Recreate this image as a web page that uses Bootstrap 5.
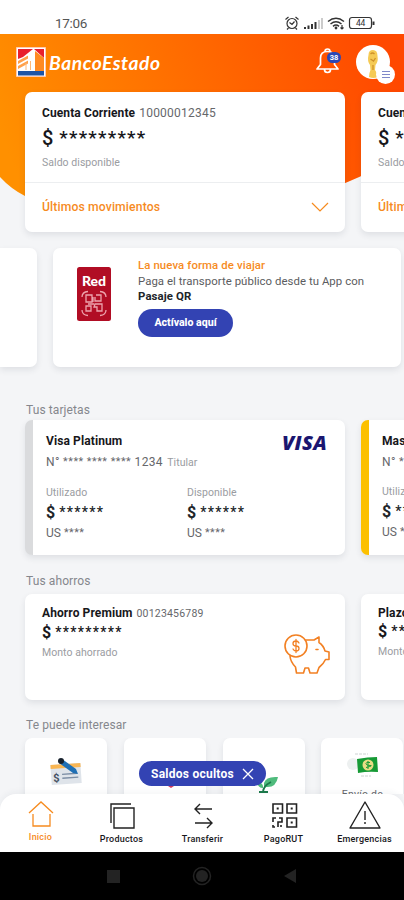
<!DOCTYPE html>
<html lang="es">
<head>
<meta charset="utf-8">
<meta name="viewport" content="width=device-width, initial-scale=1">
<title>BancoEstado</title>
<link href="https://cdn.jsdelivr.net/npm/bootstrap@5.3.0/dist/css/bootstrap.min.css" rel="stylesheet">
<style>
body{font-family:Roboto,"Liberation Sans",sans-serif;background:#f4f5f7;color:#17171b;font-size:12px;line-height:16px}
.phone{width:404px;height:900px;background:#f4f5f7}
svg{display:block;flex:none}
.statusbar{height:34px;padding:15px 28px 0 55px;color:#555;background:#fff;font-size:13.5px;letter-spacing:-.35px}
.hero{z-index:0}
.hero-shape{position:absolute;left:0;top:0;z-index:-1}
.topbar{height:58px;padding:5px 9px 0 16px}
.brand{font:italic 700 19.2px/24px Lato,sans-serif;color:#fff;letter-spacing:.55px;margin-left:3px}
.bell{margin-right:15px}
.count{position:absolute;left:12px;top:5px;width:14px;height:11px;border-radius:6px;background:#2b47b5;color:#fff;font-size:7.5px;line-height:11px;font-weight:700}
.avatar{width:39px;height:44px}
.avatar-menu{position:absolute;left:20px;top:26px}
.strip{padding-left:25px;gap:16px}
.panel{background:#fff;border-radius:7px;box-shadow:0 3px 6px rgba(40,50,70,.1);flex:none;width:320px}
.account{height:140px}
.account-top{height:91px;padding:13px 17px 0;border-bottom:1px solid #eceef0}
.account-more{height:49px;padding:0 16px 1px 17px;color:#f68b1f;font-weight:500;font-size:12.2px;letter-spacing:.12px}
.ttl{font-weight:700;letter-spacing:.1px}
.num{color:#66676b}
.acct-no{letter-spacing:.24px;margin-left:1px}
.hint{color:#9a9ca1;font-size:10.5px;letter-spacing:.05px}
.stars{display:inline-block;line-height:1}
.amt{font-weight:500;font-size:20px;line-height:26px;margin-top:4px}
.amt .stars{font-size:19px;letter-spacing:1.25px;margin-left:1px;vertical-align:1px}
.amt-sm{font-weight:700;font-size:16px;line-height:20px}
.amt-sm .stars{font-size:14px;font-weight:500;letter-spacing:1.3px;vertical-align:1px}
.promo-strip{gap:16px;margin-top:16px}
.promo{height:119px}
.promo-cut{width:37px;border-radius:0 7px 7px 0}
.promo-main{width:348px;padding:10px 20px 0 24px}
.promo-art{margin-top:9px;margin-right:27px}
.promo-copy{font-size:11.4px;line-height:15.5px;color:#5b5c60;letter-spacing:.05px}
.promo-ttl{color:#f68b1f;font-weight:500;letter-spacing:.1px}
.pill-btn{background:#3343b3;color:#fff;border-radius:14px;font-size:10.6px;line-height:28px;width:95px;height:28px;padding:0;font-weight:800;margin-top:4px;border:0}
.section-name{padding-left:26px;color:#85878d;font-size:12px;line-height:16px;letter-spacing:.1px}
.credit{height:135px;border-left:8px solid #dadbdd;padding:13px 18px 0 13px}
.credit.gold{border-color:#fcc000}
.credit-head{height:21px}
.credit-use{margin-top:14px}
.credit-use .amt-sm{margin:2px 0 2px}
.visa{font:italic 800 20px/20px "Open Sans",sans-serif;color:#1a1670;letter-spacing:.3px}
.dots{letter-spacing:.5px;font-size:10.8px;vertical-align:1px;display:inline-block;line-height:1}
.card-no{letter-spacing:.35px}
.holder{margin-left:1px}
.col-use{width:141px;flex:none}
.saving{height:106px;padding:11px 15px 0 17px}
.saving .amt-sm{margin-top:1px}
.save-no{font-size:10.5px;letter-spacing:.2px;margin-left:1px}
.tile{width:82px;height:70px}
.tiles{height:56px;gap:16.8px;overflow:hidden}
.tile-name{font-size:10.5px;letter-spacing:.2px}
.toast-pill{position:absolute;left:139px;top:761px;width:127px;height:25px;border-radius:13px;background:#3343b3;color:#fff;font-weight:700;font-size:12px;letter-spacing:.25px;padding:0 12px}
.tabs{height:58px;background:#fff;border-radius:16px 16px 0 0;font-size:9px;line-height:10px;font-weight:500;letter-spacing:.22px;box-shadow:0 -2px 6px rgba(40,50,70,.05)}
.tabs>div{width:81px;flex:none}
.tabs .on{color:#f68b1f}
.sysbar{height:48px;background:#000;padding:0 107px}
.mt-a{margin-top:35px}.mt-b{margin-top:2px}.mt-c{margin-top:18px}.mt-d{margin-top:5px}.mt-e{margin-top:17px}
</style>
<script src="https://cdn.jsdelivr.net/npm/bootstrap@5.3.0/dist/js/bootstrap.bundle.min.js"></script>
</head>
<body class="overflow-hidden">
<div class="phone position-relative overflow-hidden d-flex flex-column">
  <div class="statusbar d-flex justify-content-between">
    <span>17:06</span>
    <svg width="92" height="16" viewBox="0 0 92 16" fill="none" stroke="#333" stroke-width="1.2">
      <circle cx="8" cy="8.5" r="5"/><path d="M5.500 7.500l2.500 2 2.500-3M1.500 4.500L4.500 2M11.500 2l3 2.500M4.500 13L3 14.500M11.500 13l1.500 1.500"/>
      <path d="M21 14v-2M24.500 14v-3.500M28 14V9M31.500 14V7" stroke-width="2"/><path d="M35 14V5M38 14V3" stroke="#aaa"/>
      <path d="M44 6.500q8-6.500 16 0M46.500 9q5.500-4.500 11 0M49 11.300q3-2.500 6 0" stroke-width="1.500"/><circle cx="52" cy="13" r="1.400" fill="#333" stroke="none"/><path d="M58 10v4m-1.500-1.500L58 14l1.500-1.500"/>
      <rect x="65.500" y="2.500" width="22" height="11" rx="2.500"/><path d="M89.500 6.500v3.500" stroke-width="2"/>
      <text x="76.500" y="11.200" font-size="8.500" font-family="Roboto" text-anchor="middle" fill="#333" stroke="none">44</text>
    </svg>
  </div>

  <div class="hero position-relative">
    <svg class="hero-shape" width="404" height="200" viewBox="0 0 404 200">
      <defs><linearGradient id="g" x1="0" y1=".5" x2="1" y2=".32"><stop offset="0" stop-color="#ff9000"/><stop offset=".5" stop-color="#ff6c00"/><stop offset="1" stop-color="#ff4800"/></linearGradient></defs>
      <path d="M0 0H404V119Q375 137 343 150Q180 230 25 162Q11 155 0 143Z" fill="url(#g)"/>
    </svg>
    <div class="topbar d-flex align-items-start">
      <svg class="mt-2" width="30" height="30" viewBox="0 0 30 30">
        <path d="M.5.500h29v29H.5z" fill="#fff" stroke="#ffc9b0"/><path d="M2 2h15L7 10 2 12zM18 2h10v9z" fill="#e8202e"/><path d="M2 24h26v4.500H2z" fill="#1c54a6"/>
        <path d="M2 14l11-6v3L2 17zM2 19l11-6v3L2 22z" fill="#ffa04a"/><path d="M19 4l9 7v13h-9z" fill="#ff8a22"/><path d="M12 8l7-5v19h-7z" fill="#fff"/><path d="M14.500 14v9M10 16v7" stroke="#ffb978"/>
      </svg>
      <span class="brand mt-2 pt-1">BancoEstado</span>
      <div class="bell position-relative ms-auto mt-2 text-center">
        <svg width="26" height="28" viewBox="0 0 26 28" fill="none" stroke="#fff" stroke-width="1.700" stroke-linejoin="round"><path d="M10 4.500q0-2.500 2.500-2.500T15 4.500M2 22h21l-3.500-4.500V11q0-6.500-7-6.500t-7 6.500v6.500zM9.500 22.500q0 3 3 3t3-3"/></svg>
        <span class="count">38</span>
      </div>
      <div class="avatar position-relative">
        <svg width="34" height="46" viewBox="0 0 34 46"><circle cx="17" cy="23" r="17" fill="#fff"/><path d="M12.500 16q0-5 4.500-5t4.500 6q1 6-2 9l-.5 5q3 4 3 7-5 2-9 0 0-4 1.500-7L14 26q-3-4-1.500-10z" fill="#f5ca55"/><path d="M14.500 15q2-2 4 0M14.500 20l3 2 2-3M17 26v5" stroke="#cf922b" fill="none" stroke-width="1.300"/></svg>
        <svg class="avatar-menu" width="19" height="19" viewBox="0 0 19 19"><circle cx="9.500" cy="9.500" r="9.500" fill="#fff"/><path d="M6 6.500h8M6 9.500h8M6 12.500h8" stroke="#8088c9" stroke-width="1.200"/></svg>
      </div>
    </div>
    <div class="strip d-flex">
      <div class="panel account">
        <div class="account-top">
          <div><span class="ttl">Cuenta Corriente</span> <span class="num acct-no">10000012345</span></div>
          <div class="amt">$ <span class="stars">*********</span></div>
          <div class="hint mt-1">Saldo disponible</div>
        </div>
        <div class="account-more d-flex justify-content-between align-items-center"><span>Últimos movimientos</span>
          <svg width="18" height="10" viewBox="0 0 18 10" fill="none" stroke="#f68b1f" stroke-width="1.200"><path d="M1 1l8 8 8-8"/></svg></div>
      </div>
      <div class="panel account">
        <div class="account-top">
          <div><span class="ttl">Cuenta Vista</span></div>
          <div class="amt">$ <span class="stars">*********</span></div>
          <div class="hint mt-1">Saldo disponible</div>
        </div>
        <div class="account-more d-flex align-items-center"><span>Últimos movimientos</span></div>
      </div>
    </div>
  </div>

  <div class="promo-strip d-flex">
    <div class="panel promo promo-cut"></div>
    <div class="panel promo promo-main d-flex align-items-start">
      <svg class="promo-art" width="34" height="54" viewBox="0 0 34 54">
        <rect width="34" height="54" rx="2.500" fill="#b10d24"/>
        <text x="17" y="19" font-family="Lato" font-weight="900" font-size="14" text-anchor="middle" textLength="24" fill="#fff">Red</text>
        <g fill="none" stroke="#eda4ad" stroke-width="1.300"><path d="M5 30q0-5 6-5.500M23 24.500q6 .5 6 5.500M5 43q0 5 6 5.500M23 48.500q6-.5 6-5.500M9 28h6v7H9zM9 39h5v5H9zM19 28h5v6h-6v-4M18 37h7v7h-5v-4h-3zM11 37h6M16 30v5"/></g>
      </svg>
      <div class="promo-copy">
        <div class="promo-ttl">La nueva forma de viajar</div>
        <div class="text-nowrap">Paga el transporte público desde tu App con</div>
        <div class="ttl text-dark">Pasaje QR</div>
        <button class="pill-btn btn d-block">Actívalo aquí</button>
      </div>
    </div>
  </div>

  <div class="section-name mt-a">Tus tarjetas</div>
  <div class="strip d-flex mt-b">
    <div class="panel credit">
      <div class="credit-head d-flex justify-content-between"><span class="ttl">Visa Platinum</span><span class="visa">VISA</span></div>
      <div class="num card-no">N° <span class="dots">**** **** ****</span> 1234 <span class="hint holder">Titular</span></div>
      <div class="d-flex num credit-use">
        <div class="col-use"><div class="hint">Utilizado</div><div class="amt-sm text-dark">$ <span class="stars">******</span></div><div>US <span class="dots">****</span></div></div>
        <div><div class="hint">Disponible</div><div class="amt-sm text-dark">$ <span class="stars">******</span></div><div>US <span class="dots">****</span></div></div>
      </div>
    </div>
    <div class="panel credit gold">
      <div class="credit-head d-flex"><span class="ttl">Mastercard</span></div>
      <div class="num card-no">N° <span class="dots">**** **** ****</span></div>
      <div class="num credit-use"><div class="hint">Utilizado</div><div class="amt-sm text-dark">$ <span class="stars">******</span></div><div>US <span class="dots">****</span></div></div>
    </div>
  </div>

  <div class="section-name mt-c">Tus ahorros</div>
  <div class="strip d-flex mt-d">
    <div class="panel saving d-flex justify-content-between">
      <div>
        <div><span class="ttl">Ahorro Premium</span> <span class="num save-no">00123456789</span></div>
        <div class="amt-sm">$ <span class="stars">*********</span></div>
        <div class="hint mt-b">Monto ahorrado</div>
      </div>
      <svg class="mt-4 pt-1" width="46" height="46" viewBox="0 -1 46 42" fill="none" stroke="#f28023" stroke-width="1.600" stroke-linejoin="round" stroke-linecap="round">
        <circle cx="12" cy="12" r="11"/><path d="M22 6h8l5-3v5.500q4.500 3 6 8.500l4 1v7.500h-3.500q-2 4.500-6.500 8l-2 5.500h-7l-1.500-5h-3.500L19.500 39h-7l-1-6q-5-5-5.500-11M32 15.500h2"/>
        <path d="M15 9q-1-2-3-2-3 0-3 2.500t3 2.500 3 2.500-3 2.500q-2 0-3-2M12 5.500v13" stroke-width="1.300"/>
      </svg>
    </div>
    <div class="panel saving">
      <div class="ttl">Plazo Fijo</div>
      <div class="amt-sm">$ <span class="stars">*********</span></div>
      <div class="hint mt-b">Monto</div>
    </div>
  </div>

  <div class="section-name mt-e">Te puede interesar</div>
  <div class="tiles strip d-flex mt-d">
    <div class="panel tile"><svg width="82" height="56" viewBox="0 0 82 56"><g transform="rotate(-4 41 35)"><path d="M26 26h30v20H26z" fill="#dfe4ea"/><path d="M26 26h30v4H26z" fill="#f9b653"/><path d="M37 36h15M37 40h16" stroke="#7b8da4" stroke-width="1.300"/><text x="28" y="43" font-size="11" font-weight="700" font-family="Roboto" fill="#465262">$</text></g><path d="M37 21l14 10 2 5-5-1-14-10z" fill="#1f6fb4"/><circle cx="36" cy="23" r="3" fill="#17212d"/></svg></div>
    <div class="panel tile"><svg width="82" height="56" viewBox="0 0 82 56"><path d="M41 46h12l-6 4z" fill="#d43a5d"/></svg></div>
    <div class="panel tile"><svg width="82" height="56" viewBox="0 0 82 56"><path d="M41 52V45q2-7 14-6-2 11-12 10zM40 50q-5 0-6-6 5 0 6 4z" fill="#4fbb7c"/><path d="M40 54q0-6 8-10M36 54h9" stroke="#1c7a4b" stroke-width="1.800" fill="none"/></svg></div>
    <div class="panel tile text-center"><svg width="82" height="49" viewBox="0 0 82 49"><circle cx="32" cy="26" r="6" fill="#edf0f0"/><path d="M36 21q11-2 20-2l1 15q-10-1-20 1z" fill="#169a35"/><circle cx="47" cy="27" r="5.500" fill="#e8dc85"/><path d="M49 24.500q-4-1-4 1t4 2-4 2M47 23v8" stroke="#169a35" fill="none"/><path d="M34 16h13M40 38h10" stroke="#cdd2d2" stroke-dasharray="3 1"/></svg><div class="num tile-name">Envío de</div></div>
  </div>

  <div class="tabs d-flex text-center position-relative">
    <div class="on"><svg class="mx-auto" width="40" height="38" viewBox="0 0 40 38" fill="none" stroke="#f68b1f" stroke-width="1.300"><path d="M8 19L20 8l12 11M12 20v12h17V20"/></svg>Inicio</div>
    <div><svg class="mx-auto" width="40" height="40" viewBox="0 0 40 40" fill="none" stroke="#222" stroke-width="1.400"><path d="M12 14h20v20H12zM9 29V10h20"/></svg>Productos</div>
    <div><svg class="mx-auto" width="40" height="40" viewBox="0 0 40 40" fill="none" stroke="#222" stroke-width="1.400"><path d="M29 15H12m5-5l-5 5 5 5M12 29h17m-5-5l5 5-5 5"/></svg>Transferir</div>
    <div><svg class="mx-auto" width="40" height="40" viewBox="0 0 40 40" fill="none" stroke="#222" stroke-width="1.600"><path d="M9 10h9.500v9H9zM23 10h9.500v9H23zM23 24h9.500v9H23zM9 28v-4h3M15 24h3v4h-4v5M9 31v2h2M17 31v2"/><path d="M12.700 14.500h2M26.700 14.500h2M26.700 28.500h2" stroke-width="2"/></svg>PagoRUT</div>
    <div><svg class="mx-auto" width="40" height="40" viewBox="0 0 40 40" fill="none" stroke="#222" stroke-width="1.400" stroke-linejoin="round"><path d="M20 8l15 26H5zM20 17v9M20 28v2"/></svg>Emergencias</div>
  </div>
  <div class="sysbar d-flex justify-content-between align-items-center">
    <svg width="13" height="13"><path d="M0 0h13v13H0z" fill="#232323"/></svg>
    <svg width="20" height="20"><circle cx="10" cy="10" r="8.500" fill="none" stroke="#232323" stroke-width="1.500"/><circle cx="10" cy="10" r="6" fill="#232323"/></svg>
    <svg width="13" height="14"><path d="M12 0v14L0 7z" fill="#232323"/></svg>
  </div>

  <div class="toast-pill d-flex justify-content-between align-items-center"><span>Saldos ocultos</span><svg width="12" height="12" viewBox="0 0 12 12" stroke="#fff" stroke-width="1.300"><path d="M1 1l10 10M11 1L1 11"/></svg></div>
</div>
</body>
</html>
